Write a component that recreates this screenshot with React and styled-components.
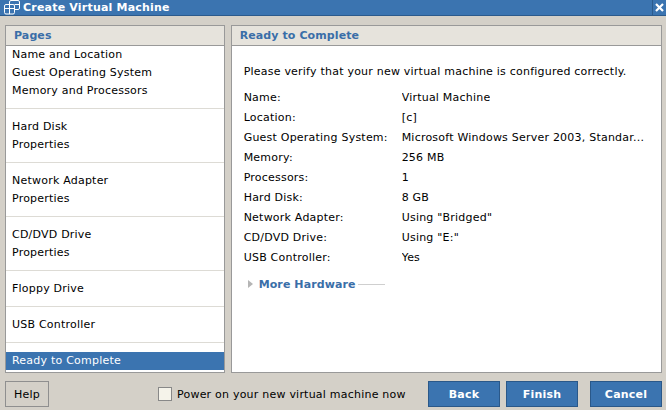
import styled, { createGlobalStyle } from "styled-components";

const GlobalStyle = createGlobalStyle`
body {
  margin: 0;
  background: #d4d0c8;
  font-family: "DejaVu Sans", Verdana, sans-serif;
  font-size: 11px;
  letter-spacing: 0.22px;
  color: #000;
}
`;

const Window = styled.div`
width: 666px;
height: 410px;
display: flex;
flex-direction: column;
background: #d4d0c8;
overflow: hidden;
`;

const TitleBar = styled.div`
height: 15px;
background: #3b74b0;
border-bottom: 1px solid #2b5a8c;
display: flex;
align-items: center;
color: #fff;
font-weight: bold;
font-size: 11px;
letter-spacing: 0.2px;
`;

const TitleIcon = styled.div`
width: 17px;
height: 15px;
margin: 0 3px 0 3px;
display: flex;
`;

const TitleText = styled.div`
flex: 1;
`;

const CloseBox = styled.div`
width: 13px;
height: 15px;
border-left: 1px solid #2b5a8c;
display: flex;
align-items: center;
justify-content: center;
`;

const Body = styled.div`
display: flex;
gap: 6px;
padding: 9px 4px 0 5px;
height: 348px;
`;

const Panel = styled.div`
width: ${p => p.w}px;
border: 1px solid #999;
background: #fff;
display: flex;
flex-direction: column;
`;

const PanelHeader = styled.div`
height: 19px;
line-height: 19px;
background: #e6e3dc;
border-bottom: 1px solid #999;
color: #3a6ea8;
font-weight: bold;
padding-left: 8px;
letter-spacing: 0.1px;
`;

const PageGroup = styled.div`
padding: ${p => (p.first ? "0" : "9px")} 0 8px;
border-bottom: ${p => (p.last ? "none" : "1px solid #dddbd5")};
`;

const PageItem = styled.div`
height: 18px;
line-height: 18px;
padding-left: 6px;
background: ${p => (p.active ? "#3b74b0" : "transparent")};
color: ${p => (p.active ? "#fff" : "#000")};
`;

const Content = styled.div`
padding: 16px 12px 0;
`;

const Intro = styled.div`
line-height: 20px;
margin-bottom: 6px;
`;

const InfoRow = styled.div`
display: flex;
line-height: 20px;
white-space: nowrap;
`;

const InfoLabel = styled.div`
width: 158px;
flex-shrink: 0;
`;

const InfoValue = styled.div`
overflow: hidden;
text-overflow: ellipsis;
`;

const MoreRow = styled.div`
display: flex;
align-items: center;
margin-top: 6px;
height: 20px;
padding-left: 4px;
color: #3a6ea8;
font-weight: bold;
letter-spacing: 0.1px;
`;

const Arrow = styled.span`
width: 0;
height: 0;
border-top: 4px solid transparent;
border-bottom: 4px solid transparent;
border-left: 5px solid #b5b5b5;
margin-right: 6px;
`;

const Rule = styled.span`
width: 27px;
height: 1px;
background: #cfcfcf;
margin-left: 2px;
margin-top: 1px;
`;

const Footer = styled.div`
display: flex;
align-items: center;
padding: 8px 4px 0 5px;
`;

const HelpButton = styled.button`
width: 44px;
height: 26px;
border: 1px solid #8f8f8f;
background: #d4d0c8;
font-family: inherit;
font-size: 11px;
letter-spacing: inherit;
color: #000;
padding: 0;
`;

const CheckLabel = styled.label`
display: flex;
align-items: center;
margin-left: 109px;
`;

const CheckBox = styled.span`
width: 12px;
height: 12px;
border: 1px solid #888;
background: #f5f3ea;
margin-right: 5px;
`;

const Buttons = styled.div`
margin-left: auto;
display: flex;
`;

const BlueButton = styled.button`
width: 72px;
height: 26px;
margin-left: ${p => p.gap || 0}px;
border: 1px solid #2a5889;
background: #3b74b0;
color: #fff;
font-family: inherit;
font-weight: bold;
font-size: 11px;
letter-spacing: 0.2px;
padding: 0;
`;

const pages = [
  ["Name and Location", "Guest Operating System", "Memory and Processors"],
  ["Hard Disk", "Properties"],
  ["Network Adapter", "Properties"],
  ["CD/DVD Drive", "Properties"],
  ["Floppy Drive"],
  ["USB Controller"],
];

const summary = [
  ["Name:", "Virtual Machine"],
  ["Location:", "[c]"],
  ["Guest Operating System:", "Microsoft Windows Server 2003, Standar..."],
  ["Memory:", "256 MB"],
  ["Processors:", "1"],
  ["Hard Disk:", "8 GB"],
  ["Network Adapter:", "Using \"Bridged\""],
  ["CD/DVD Drive:", "Using \"E:\""],
  ["USB Controller:", "Yes"],
];

function VmIcon() {
  return (
    <svg width="17" height="15" viewBox="0 0 17 15" fill="none" stroke="#fff" strokeWidth="1">
      <rect x="6.5" y="0.5" width="10" height="9" rx="1.5" />
      <rect x="1.5" y="4.5" width="10" height="9.5" rx="1.5" fill="#3b74b0" />
      <line x1="1.5" y1="8.5" x2="11.5" y2="8.5" />
      <line x1="6.5" y1="4.5" x2="6.5" y2="14" />
      <line x1="11.5" y1="4.5" x2="16.5" y2="4.5" />
    </svg>
  );
}

export default function App() {
  return (
    <Window>
      <GlobalStyle />
      <TitleBar>
        <TitleIcon>
          <VmIcon />
        </TitleIcon>
        <TitleText>Create Virtual Machine</TitleText>
        <CloseBox>
          <svg width="9" height="9" viewBox="0 0 9 9">
            <path d="M1 1 L8 8 M8 1 L1 8" stroke="#fff" strokeWidth="2.2" />
          </svg>
        </CloseBox>
      </TitleBar>
      <Body>
        <Panel w={219}>
          <PanelHeader>Pages</PanelHeader>
          {pages.map((g, i) => (
            <PageGroup key={i} first={i === 0}>
              {g.map(t => (
                <PageItem key={t}>{t}</PageItem>
              ))}
            </PageGroup>
          ))}
          <PageGroup last>
            <PageItem active>Ready to Complete</PageItem>
          </PageGroup>
        </Panel>
        <Panel w={432}>
          <PanelHeader>Ready to Complete</PanelHeader>
          <Content>
            <Intro>Please verify that your new virtual machine is configured correctly.</Intro>
            {summary.map(([k, v]) => (
              <InfoRow key={k}>
                <InfoLabel>{k}</InfoLabel>
                <InfoValue>{v}</InfoValue>
              </InfoRow>
            ))}
            <MoreRow>
              <Arrow />
              More Hardware
              <Rule />
            </MoreRow>
          </Content>
        </Panel>
      </Body>
      <Footer>
        <HelpButton>Help</HelpButton>
        <CheckLabel>
          <CheckBox />
          Power on your new virtual machine now
        </CheckLabel>
        <Buttons>
          <BlueButton>Back</BlueButton>
          <BlueButton gap={6}>Finish</BlueButton>
          <BlueButton gap={12}>Cancel</BlueButton>
        </Buttons>
      </Footer>
    </Window>
  );
}
